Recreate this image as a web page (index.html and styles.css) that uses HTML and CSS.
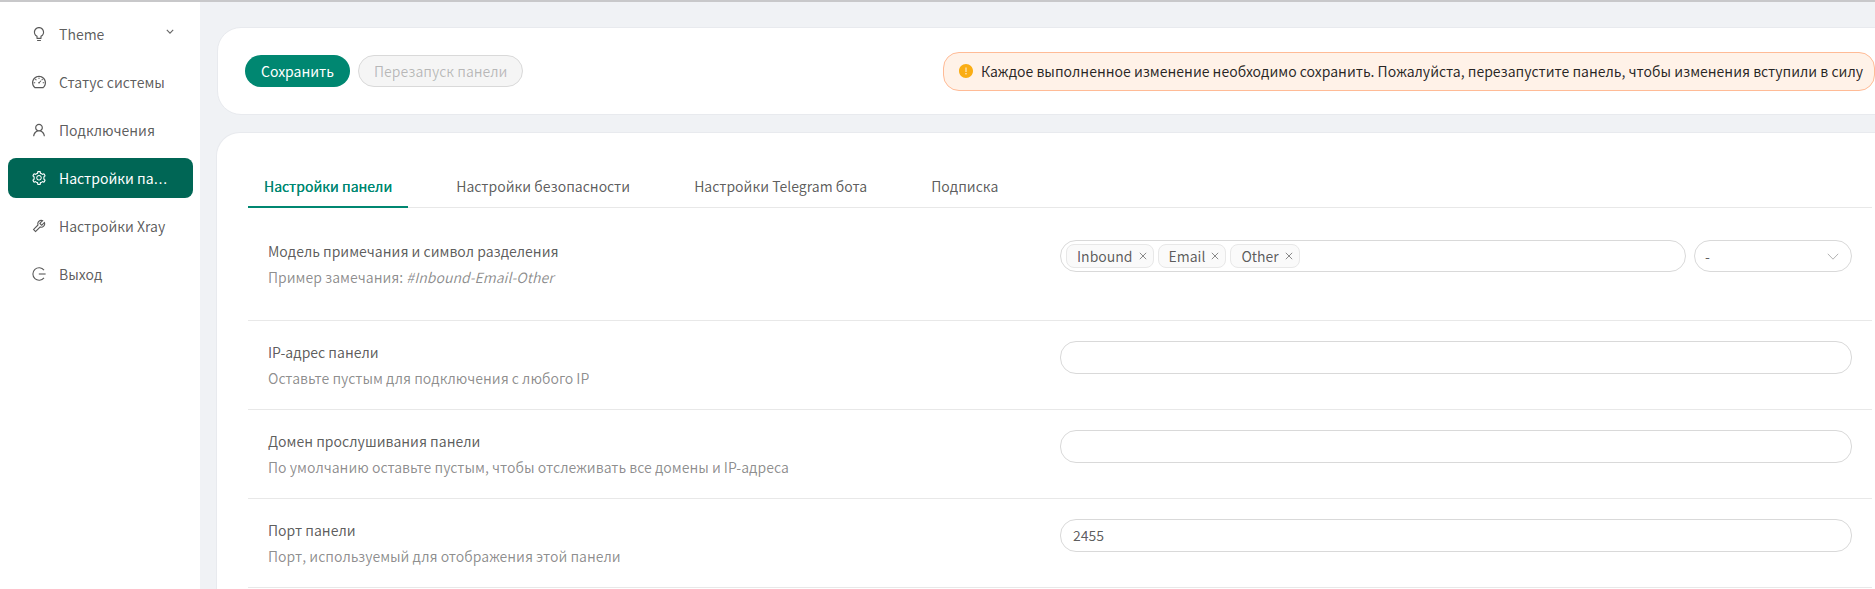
FILE: index.html
```html
<!DOCTYPE html>
<html lang="ru">
  <head>
    <meta charset="UTF-8" />
    <meta name="viewport" content="width=device-width, initial-scale=1.0" />
    <title>Настройки панели</title>
    <link rel="stylesheet" href="styles.css">
  </head>
  <body>
    <div class="layout">
      <nav class="sidebar">
        <a class="menu-item">
          <svg class="menu-icon" viewBox="64 64 896 896"><path d="M632 888H392c-4.4 0-8 3.6-8 8v32c0 17.7 14.3 32 32 32h192c17.7 0 32-14.3 32-32v-32c0-4.4-3.6-8-8-8zM512 64c-181.1 0-328 146.9-328 328 0 121.4 66 227.4 164 284.1V792c0 17.7 14.3 32 32 32h264c17.7 0 32-14.3 32-32V676.1c98-56.7 164-162.7 164-284.1 0-181.1-146.9-328-328-328zm127.9 549.8L604 634.6V752H420V634.6l-35.9-20.8C305.4 568.3 256 484.5 256 392c0-141.4 114.6-256 256-256s256 114.6 256 256c0 92.5-49.4 176.3-128.1 221.8z"/></svg>
          <span class="menu-label">Theme</span>
          <svg class="menu-arrow" viewBox="0 0 10 6"><path d="M1 1l4 4 4-4"/></svg>
        </a>
        <a class="menu-item">
          <svg class="menu-icon" viewBox="64 64 896 896"><path d="M924.8 385.6a446.7 446.7 0 0 0-96-142.4 446.7 446.7 0 0 0-142.4-96C631.1 123.8 572.5 112 512 112s-119.1 11.8-174.4 35.2a446.7 446.7 0 0 0-142.4 96 446.7 446.7 0 0 0-96 142.4C75.8 440.9 64 499.5 64 560c0 132.7 58.3 257.7 159.9 343.1l1.7 1.4c5.8 4.8 13.1 7.5 20.6 7.5h531.7c7.5 0 14.8-2.7 20.6-7.5l1.7-1.4C901.7 817.7 960 692.7 960 560c0-60.5-11.9-119.1-35.2-174.4zM761.4 836H262.6A371.12 371.12 0 0 1 140 560c0-99.4 38.7-192.8 109-263 70.3-70.3 163.7-109 263-109 99.4 0 192.8 38.7 263 109 70.3 70.3 109 163.7 109 263 0 105.6-44.5 205.5-122.6 276zM623.5 421.5a8.03 8.03 0 0 0-11.3 0L527.7 506c-18.7-5-39.4-.2-54.1 14.5a55.95 55.95 0 0 0 0 79.2 55.95 55.95 0 0 0 79.2 0 55.87 55.87 0 0 0 14.5-54.1l84.5-84.5c3.1-3.1 3.1-8.2 0-11.3l-28.3-28.3zM490 320h44c4.4 0 8-3.6 8-8v-80c0-4.4-3.6-8-8-8h-44c-4.4 0-8 3.6-8 8v80c0 4.4 3.6 8 8 8zm260 218v44c0 4.4 3.6 8 8 8h80c4.4 0 8-3.6 8-8v-44c0-4.4-3.6-8-8-8h-80c-4.4 0-8 3.6-8 8zm12.7-197.2l-31.1-31.1a8.03 8.03 0 0 0-11.3 0l-56.6 56.6a8.03 8.03 0 0 0 0 11.3l31.1 31.1c3.1 3.1 8.2 3.1 11.3 0l56.6-56.6c3.1-3.1 3.1-8.2 0-11.3zm-458.6-31.1a8.03 8.03 0 0 0-11.3 0l-31.1 31.1a8.03 8.03 0 0 0 0 11.3l56.6 56.6c3.1 3.1 8.2 3.1 11.3 0l31.1-31.1c3.1-3.1 3.1-8.2 0-11.3l-56.6-56.6zM262 530h-80c-4.4 0-8 3.6-8 8v44c0 4.4 3.6 8 8 8h80c4.4 0 8-3.6 8-8v-44c0-4.4-3.6-8-8-8z"/></svg>
          <span class="menu-label">Статус системы</span>
        </a>
        <a class="menu-item">
          <svg class="menu-icon" viewBox="64 64 896 896"><path d="M858.5 763.6a374 374 0 0 0-80.6-119.5 375.63 375.63 0 0 0-119.5-80.6c-.4-.2-.8-.3-1.2-.5C719.5 518 760 444.7 760 362c0-137-111-248-248-248S264 225 264 362c0 82.7 40.5 156 102.8 201.1-.4.2-.8.3-1.2.5-44.8 18.9-85 46-119.5 80.6a375.63 375.63 0 0 0-80.6 119.5A371.7 371.7 0 0 0 136 901.8a8 8 0 0 0 8 8.2h60c4.4 0 7.9-3.5 8-7.8 2-77.2 33-149.5 87.8-204.3 56.7-56.7 132-87.9 212.2-87.9s155.5 31.2 212.2 87.9C779 752.7 810 825 812 902.2c.1 4.4 3.6 7.8 8 7.8h60a8 8 0 0 0 8-8.2c-1-47.8-10.9-94.3-29.5-138.2zM512 534c-45.9 0-89.1-17.9-121.6-50.4S340 407.9 340 362c0-45.9 17.9-89.1 50.4-121.6S466.1 190 512 190s89.1 17.9 121.6 50.4S684 316.1 684 362c0 45.9-17.9 89.1-50.4 121.6S557.9 534 512 534z"/></svg>
          <span class="menu-label">Подключения</span>
        </a>
        <a class="menu-item menu-item-active">
          <svg class="menu-icon" viewBox="64 64 896 896"><path d="M924.8 625.7l-65.5-56c3.1-19 4.7-38.4 4.7-57.8s-1.6-38.8-4.7-57.8l65.5-56a32.03 32.03 0 0 0 9.3-35.2l-.9-2.6a443.74 443.74 0 0 0-79.7-137.9l-1.8-2.1a32.12 32.12 0 0 0-35.1-9.5l-81.3 28.9c-30-24.6-63.5-44-99.7-57.6l-15.7-85a32.05 32.05 0 0 0-25.8-25.7l-2.7-.5c-52.1-9.4-106.9-9.4-159 0l-2.7.5a32.05 32.05 0 0 0-25.8 25.7l-15.8 85.4a351.86 351.86 0 0 0-99 57.4l-81.9-29.1a32 32 0 0 0-35.1 9.5l-1.8 2.1a446.02 446.02 0 0 0-79.7 137.9l-.9 2.6c-4.5 12.5-.8 26.5 9.3 35.2l66.3 56.6c-3.1 18.8-4.6 38-4.6 57.1 0 19.2 1.5 38.4 4.6 57.1L99 625.5a32.03 32.03 0 0 0-9.3 35.2l.9 2.6c18.1 50.4 44.9 96.9 79.7 137.9l1.8 2.1a32.12 32.12 0 0 0 35.1 9.5l81.9-29.1c29.8 24.5 63.1 43.9 99 57.4l15.8 85.4a32.05 32.05 0 0 0 25.8 25.7l2.7.5a449.4 449.4 0 0 0 159 0l2.7-.5a32.05 32.05 0 0 0 25.8-25.7l15.7-85a350 350 0 0 0 99.7-57.6l81.3 28.9a32 32 0 0 0 35.1-9.5l1.8-2.1c34.8-41.1 61.6-87.5 79.7-137.9l.9-2.6c4.5-12.3.8-26.3-9.3-35zM788.3 465.9c2.5 15.1 3.8 30.6 3.8 46.1s-1.3 31-3.8 46.1l-6.6 40.1 74.7 63.9a370.03 370.03 0 0 1-42.6 73.6L721 702.8l-31.4 25.8c-23.9 19.6-50.5 35-79.3 45.8l-38.1 14.3-17.9 97a377.5 377.5 0 0 1-85 0l-17.9-97.2-37.8-14.5c-28.5-10.8-55-26.2-78.7-45.7l-31.4-25.9-93.4 33.2c-17-22.9-31.2-47.6-42.6-73.6l75.5-64.5-6.5-40c-2.4-14.9-3.7-30.3-3.7-45.5 0-15.3 1.2-30.6 3.7-45.5l6.5-40-75.5-64.5c11.3-26.1 25.6-50.7 42.6-73.6l93.4 33.2 31.4-25.9c23.7-19.5 50.2-34.9 78.7-45.7l37.9-14.3 17.9-97.2c28.1-3.2 56.8-3.2 85 0l17.9 97 38.1 14.3c28.7 10.8 55.4 26.2 79.3 45.8l31.4 25.8 92.8-32.9c17 22.9 31.2 47.6 42.6 73.6L781.8 426l6.5 39.9zM512 326c-97.2 0-176 78.8-176 176s78.8 176 176 176 176-78.8 176-176-78.8-176-176-176zm79.2 255.2A111.6 111.6 0 0 1 512 614c-29.9 0-58-11.7-79.2-32.8A111.6 111.6 0 0 1 400 502c0-29.9 11.7-58 32.8-79.2C454 401.6 482.1 390 512 390c29.9 0 58 11.6 79.2 32.8A111.6 111.6 0 0 1 624 502c0 29.9-11.7 58-32.8 79.2z"/></svg>
          <span class="menu-label">Настройки па<span class="menu-dots">…</span></span>
        </a>
        <a class="menu-item">
          <svg class="menu-icon" viewBox="64 64 896 896"><path d="M876.6 239.5c-.5-.9-1.2-1.8-2-2.5-5-5-13.1-5-18.1 0L684.2 409.3l-67.9-67.9L788.7 169c.8-.8 1.4-1.6 2-2.5 3.6-6.1 1.6-13.9-4.5-17.5-98.2-58-226.8-44.7-311.3 39.7-67 67-89.2 162-66.5 247.4l-293 293c-3 3-2.8 7.9.3 11l169.7 169.7c3.1 3.1 8.1 3.3 11 .3l292.9-292.9c85.5 22.8 180.5.7 247.6-66.4 84.4-84.5 97.7-213.1 39.7-311.3zM786 499.8c-58.1 58.1-145.3 69.3-214.6 33.6l-8.8 8.8-.1-.1-274 274.1-79.2-79.2 230.1-230.1s0 .1.1.1l52.8-52.8c-35.7-69.3-24.5-156.5 33.6-214.6a184.2 184.2 0 0 1 144-53.5L537 318.9a32.05 32.05 0 0 0 0 45.3l124.5 124.5a32.05 32.05 0 0 0 45.3 0l132.8-132.8c3.7 51.8-14.4 104.8-53.6 143.9z"/></svg>
          <span class="menu-label">Настройки Xray</span>
        </a>
        <a class="menu-item">
          <svg class="menu-icon menu-icon-line" viewBox="0 0 14 14"><path d="M12 3.2A6.2 6.2 0 1 0 12 10.8"/><path d="M6.8 7h6.8"/></svg>
          <span class="menu-label">Выход</span>
        </a>
      </nav>

      <main class="content">
        <section class="card card-actions">
          <div class="actions">
            <button class="btn btn-primary" type="button">Сохранить</button>
            <button class="btn btn-disabled" type="button" disabled>Перезапуск панели</button>
          </div>
          <div class="alert">
            <svg class="alert-icon" viewBox="64 64 896 896"><path d="M512 64C264.6 64 64 264.6 64 512s200.6 448 448 448 448-200.6 448-448S759.4 64 512 64zm-32 232c0-4.4 3.6-8 8-8h48c4.4 0 8 3.6 8 8v272c0 4.4-3.6 8-8 8h-48c-4.4 0-8-3.6-8-8V296zm32 440a48.01 48.01 0 0 1 0-96 48.01 48.01 0 0 1 0 96z"/></svg>
            <span>Каждое выполненное изменение необходимо сохранить. Пожалуйста, перезапустите панель, чтобы изменения вступили в силу</span>
          </div>
        </section>

        <section class="card card-settings">
          <div class="tabs">
            <a class="tab tab-active">Настройки панели</a>
            <a class="tab">Настройки безопасности</a>
            <a class="tab">Настройки Telegram бота</a>
            <a class="tab">Подписка</a>
          </div>

          <div class="row row-first">
            <div class="row-text">
              <div class="row-title">Модель примечания и символ разделения</div>
              <div class="row-desc">Пример замечания: <i>#Inbound-Email-Other</i></div>
            </div>
            <div class="row-field">
              <div class="field field-small tag-field">
                <span class="tag">Inbound <svg class="tag-close" viewBox="0 0 8 8"><path d="M.8.8l6.4 6.4M7.2.8L.8 7.2"/></svg></span>
                <span class="tag">Email <svg class="tag-close" viewBox="0 0 8 8"><path d="M.8.8l6.4 6.4M7.2.8L.8 7.2"/></svg></span>
                <span class="tag">Other <svg class="tag-close" viewBox="0 0 8 8"><path d="M.8.8l6.4 6.4M7.2.8L.8 7.2"/></svg></span>
              </div>
              <div class="field field-small select-field">
                <span>-</span>
                <svg class="select-arrow" viewBox="0 0 12 7"><path d="M.8.8L6 6.2 11.2.8"/></svg>
              </div>
            </div>
          </div>

          <div class="row">
            <div class="row-text">
              <div class="row-title">IP-адрес панели</div>
              <div class="row-desc">Оставьте пустым для подключения с любого IP</div>
            </div>
            <div class="row-field"><input class="field input-field" type="text" /></div>
          </div>

          <div class="row">
            <div class="row-text">
              <div class="row-title">Домен прослушивания панели</div>
              <div class="row-desc">По умолчанию оставьте пустым, чтобы отслеживать все домены и IP-адреса</div>
            </div>
            <div class="row-field"><input class="field input-field" type="text" /></div>
          </div>

          <div class="row">
            <div class="row-text">
              <div class="row-title">Порт панели</div>
              <div class="row-desc">Порт, используемый для отображения этой панели</div>
            </div>
            <div class="row-field"><input class="field input-field" type="text" value="2455" /></div>
          </div>
        </section>
      </main>
    </div>
  </body>
</html>
```

FILE: styles.css
```css
* {
  box-sizing: border-box;
}
html,
body {
  height: 100%;
}
body {
  margin: 0;
  overflow: hidden;
  border-top: 2px solid #c8c8ca;
  background-color: #f0f2f5;
  font-family: "Noto Sans CJK KR", "Noto Sans", sans-serif;
  font-size: 14px;
  line-height: 22px;
  color: rgba(0, 0, 0, 0.65);
}
.layout {
  display: flex;
  width: 1920px;
  height: 100%;
}

/* sidebar */
.sidebar {
  flex: none;
  width: 200px;
  padding: 12px 7px 0 8px;
  background-color: #fff;
}
.menu-item {
  display: flex;
  align-items: center;
  gap: 13px;
  height: 40px;
  margin-bottom: 8px;
  padding: 0 24px;
  border-radius: 8px;
  color: rgba(0, 0, 0, 0.65);
}
.menu-item-active {
  background-color: #006655;
  color: #fff;
}
.menu-icon {
  flex: none;
  width: 14px;
  height: 14px;
  fill: currentColor;
}
.menu-icon-line {
  fill: none;
  stroke: currentColor;
  stroke-width: 1.1;
}
.menu-label {
  flex: 1;
  min-width: 0;
  white-space: nowrap;
}
.menu-dots {
  font-family: "DejaVu Sans", sans-serif;
}
.menu-arrow {
  flex: none;
  width: 8px;
  height: 5px;
  margin: -5px -5px 0 0;
  fill: none;
  stroke: rgba(0, 0, 0, 0.6);
  stroke-width: 1.4;
}

/* main column */
.content {
  display: flex;
  flex-direction: column;
  flex: none;
  width: 1720px;
  padding: 25px 16px 0;
}
.card {
  border: 1px solid #e8eaee;
  border-radius: 24px;
  background-color: #fff;
}
.card-actions {
  display: flex;
  align-items: center;
  justify-content: space-between;
  flex: none;
  height: 88px;
  margin: 0 0 17px 1px;
  padding: 0 28px 0 27px;
}
.actions {
  display: flex;
  gap: 8px;
}
.btn {
  height: 32px;
  padding: 0 15px;
  border: 1px solid transparent;
  border-radius: 16px;
  font: inherit;
}
.btn-primary {
  background-color: #008771;
  color: #fff;
}
.btn-disabled {
  border-color: #d9d9d9;
  background-color: #f5f5f5;
  color: rgba(0, 0, 0, 0.25);
}
.alert {
  display: flex;
  align-items: center;
  gap: 8px;
  height: 39px;
  padding: 0 11px 0 15px;
  border: 1px solid #ffbb96;
  border-radius: 16px;
  background-color: #fff2e8;
  color: rgba(0, 0, 0, 0.85);
  white-space: nowrap;
}
.alert-icon {
  flex: none;
  width: 14px;
  height: 14px;
  fill: #faad14;
}

/* settings card */
.card-settings {
  flex: 1;
  min-height: 0;
  padding: 29px 31px 0;
  border-bottom: none;
  border-radius: 24px 24px 0 0;
}
.tabs {
  display: flex;
  gap: 32px;
  height: 46px;
  border-bottom: 1px solid #e8e8e8;
}
.tab {
  height: 46px;
  padding: 13px 16px 0;
  color: rgba(0, 0, 0, 0.65);
}
.tab-active {
  border-bottom: 2px solid #008771;
  color: #008771;
  text-shadow: 0 0 0.25px currentColor;
}
.row {
  display: grid;
  grid-template-columns: 1fr 1fr;
  height: 89px;
  padding: 20px 0;
  border-bottom: 1px solid #e8e8e8;
}
.row-first {
  height: 101px;
  margin-top: 12px;
}
.row-text {
  padding-left: 20px;
}
.row-title {
  margin-bottom: 4px;
}
.row-desc {
  color: rgba(0, 0, 0, 0.45);
}
.row-field {
  display: flex;
  gap: 8px;
  padding-right: 20px;
}

/* form controls */
.field {
  height: 33px;
  border: 1px solid #d9d9d9;
  border-radius: 16px;
  background-color: #fff;
}
.field-small {
  height: 32px;
}
.input-field {
  width: 100%;
  padding: 0 11px 1px 12px;
  outline: none;
  font: inherit;
  color: rgba(0, 0, 0, 0.65);
}
.tag-field {
  display: flex;
  align-items: center;
  gap: 4px;
  flex: 1;
  padding: 0 5px;
}
.tag {
  display: flex;
  align-items: center;
  gap: 6px;
  height: 24px;
  padding: 0 6px 0 10px;
  border: 1px solid #e8e8e8;
  border-radius: 8px;
  background-color: #fafafa;
}
.tag-close {
  flex: none;
  width: 8px;
  height: 8px;
  fill: none;
  stroke: rgba(0, 0, 0, 0.45);
  stroke-width: 1;
}
.select-field {
  display: flex;
  align-items: center;
  justify-content: space-between;
  flex: none;
  width: 158px;
  padding: 0 12px 0 10px;
}
.select-arrow {
  width: 12px;
  height: 7px;
  fill: none;
  stroke: rgba(0, 0, 0, 0.3);
  stroke-width: 1;
}
```
